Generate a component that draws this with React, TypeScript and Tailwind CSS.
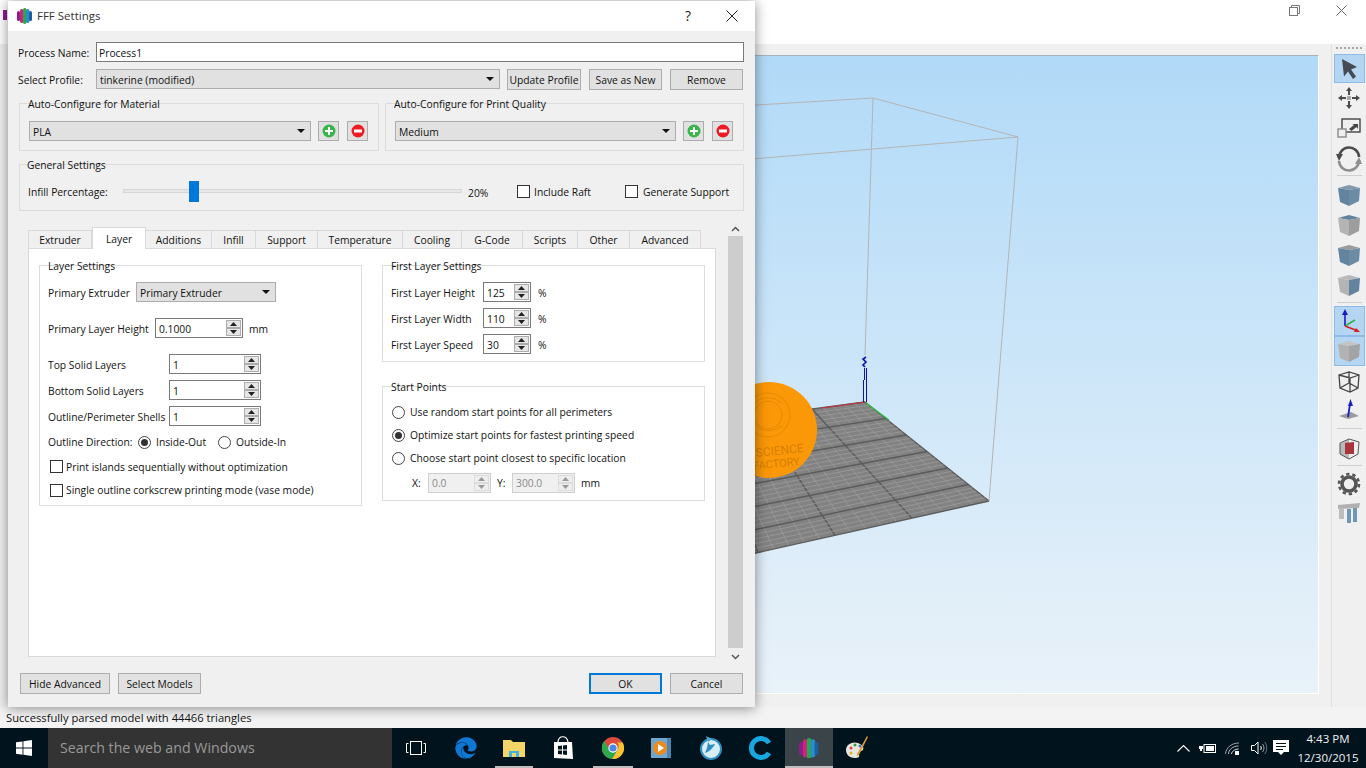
import React from "react";
import { FaEdge } from "react-icons/fa";

const B = [865, 402], R = [989, 501], F = [527, 604], L = [547, 444];
const P = (u: number, v: number) => [0, 1].map(i => B[i] + u * (R[i] - B[i]) + v * (L[i] - B[i]) + u * v * (F[i] - R[i] - L[i] + B[i]));
const line = (a: number[], b: number[], stroke: string, w: number, k: string) => (
  <line key={k} x1={a[0]} y1={a[1]} x2={b[0]} y2={b[1]} stroke={stroke} strokeWidth={w} />
);
const Grid = () => {
  const out: React.ReactNode[] = [];
  for (let i = 0; i <= 30; i++) {
    const t = i / 30;
    const major = i % 5 === 0;
    const c = major ? "#5b5b5b" : "#a2a2a2";
    const w = major ? 1.4 : 0.6;
    out.push(line(P(t, 0), P(t, 1), c, w, "a" + i));
    out.push(line(P(0, t), P(1, t), c, w, "b" + i));
  }
  return <>{out}</>;
};

const Scene = () => (
  <svg className="block w-full h-full" viewBox="8 56 1310 637">
    <polygon points={[B, R, F, L].map(p => p.join(",")).join(" ")} fill="#828282" />
    <Grid />
    <line x1="822" y1="408" x2="865" y2="402" stroke="#c8303c" strokeWidth="1.2" />
    <line x1="866" y1="403" x2="889" y2="420" stroke="#2fc04a" strokeWidth="1.3" />
    <g stroke="#b4b4b4" strokeWidth="1" fill="none">
      <line x1="873" y1="98" x2="865" y2="355" />
      <line x1="873" y1="98" x2="1018" y2="137" />
      <line x1="1018" y1="137" x2="989" y2="501" />
      <line x1="1018" y1="137" x2="740" y2="160" />
      <line x1="873" y1="98" x2="740" y2="106" />
    </g>
    <g stroke="#1010b0" strokeWidth="1" fill="none">
      <line x1="863.5" y1="402" x2="863.5" y2="380" />
      <line x1="866.5" y1="402" x2="866.5" y2="380" />
      <line x1="864.5" y1="380" x2="864.5" y2="368" />
      <line x1="866.5" y1="380" x2="866.5" y2="368" />
      <path d="M866 357l-3 2 3 3-3 3 2 2" strokeWidth="1.6" />
    </g>
    <circle cx="769" cy="430" r="48" fill="#fb9807" />
    <g fill="none" stroke="#dd8400" strokeWidth="0.7">
      <circle cx="768" cy="415" r="22" />
      <circle cx="768" cy="415" r="14" />
      <path d="M752 405q14-14 30-2M758 428q12 6 24-2" />
    </g>
    <text x="804" y="452" textAnchor="end" fontSize="12" fill="#d67f00" fontFamily="Roboto, sans-serif" transform="rotate(-6 804 452)">SCIENCE</text>
    <text x="800" y="465" textAnchor="end" fontSize="11" fill="#d67f00" fontFamily="Roboto, sans-serif" transform="rotate(-6 800 465)">FACTORY</text>
  </svg>
);

const Cube = ({ top, left, right }: { top: string; left: string; right: string }) => (
  <svg className="blur-[0.4px]" width="24" height="26" viewBox="0 0 24 26">
    <polygon points="1,6 12,3 23,6 12,8" fill={top} />
    <polygon points="1,6 12,8 12,24 3,20" fill={left} />
    <polygon points="12,8 23,6 22,19 12,24" fill={right} />
  </svg>
);

const ToolItem = ({ h, active, children }: { h: string; active?: boolean; children?: React.ReactNode }) => (
  <div className={`${h} w-[31px] flex items-center justify-center ${active ? "bg-[#b5d6f2] border border-[#8fbce6]" : ""}`}>{children}</div>
);
const ToolSep = ({ cls }: { cls: string }) => <div className={`w-[25px] h-px bg-[#cfcfcf] ${cls}`} />;

const Toolbar = () => (
  <div className="w-[35px] shrink-0 h-[663px] bg-[#f0f0f0] border-l border-[#e0e0e0] flex flex-col items-center">
    <div className="h-[3px] mt-[3px] w-[26px] border-t-2 border-dotted border-[#a8a8a8] mb-[4px]" />
    <ToolItem h="h-[29px]" active>
      <svg width="20" height="22" viewBox="0 0 20 22"><path d="M3 1l15 8-6 2.500 5 7-3 2.500-5-7.500-4 5z" fill="#454b52" /></svg>
    </ToolItem>
    <ToolItem h="h-[30px]">
      <svg width="24" height="24" viewBox="0 0 24 24" fill="#4a4a4a"><path d="M12 1l3 4h-2v4h-2V5H9zM12 23l-3-4h2v-4h2v4h2zM1 12l4-3v2h4v2H5v2zM23 12l-4 3v-2h-4v-2h4V9z" /><rect x="10" y="10" width="4" height="4" fill="#a8a8a8" /></svg>
    </ToolItem>
    <ToolItem h="h-[31px]">
      <svg width="24" height="22" viewBox="0 0 24 22" fill="none"><rect x="5" y="1" width="18" height="13" stroke="#444" strokeWidth="1.4" /><rect x="1" y="11" width="8" height="8" stroke="#8a8a8a" strokeWidth="1.4" fill="#efefef" /><path d="M12 11l5-4-2-1h6v5l-1.500-2-5 4z" fill="#444" /></svg>
    </ToolItem>
    <ToolItem h="h-[30px]">
      <svg width="26" height="26" viewBox="0 0 26 26" fill="none"><path d="M3 12A10 10 0 0 1 23 11" stroke="#4b4b4b" strokeWidth="2.6" /><path d="M0 8l7 0-4 7z" fill="#4b4b4b" /><path d="M23 14A10 10 0 0 1 3 15" stroke="#8f8f8f" strokeWidth="2.600" /><path d="M26 18l-7 0 4-7z" fill="#8f8f8f" /></svg>
    </ToolItem>
    <ToolSep cls="mt-[1px] mb-[4px]" />
    <ToolItem h="h-[30px]"><Cube top="#8299ad" left="#62849f" right="#6c8ca6" /></ToolItem>
    <ToolItem h="h-[30px]"><Cube top="#62849f" left="#b4b4b4" right="#9d9d9d" /></ToolItem>
    <ToolItem h="h-[30px]"><Cube top="#9b9b9b" left="#62849f" right="#6c8ca6" /></ToolItem>
    <ToolItem h="h-[30px]"><Cube top="#b8b8b8" left="#b4b4b4" right="#62849f" /></ToolItem>
    <ToolSep cls="mt-[2px] mb-[3px]" />
    <ToolItem h="h-[30px]" active>
      <svg width="24" height="26" viewBox="0 0 24 26" fill="none"><path d="M8 18V5" stroke="#1c1cc4" strokeWidth="1.6" /><path d="M8 1l3 6H5z" fill="#1c1cc4" /><path d="M8 18l10-6" stroke="#2fb350" strokeWidth="1.6" /><path d="M8 18l13 5" stroke="#d42020" strokeWidth="1.600" /><path d="M23 24l-6 0 2-4z" fill="#d42020" /></svg>
    </ToolItem>
    <ToolItem h="h-[30px]" active><Cube top="#c4c4c4" left="#b2b2b2" right="#a3a3a3" /></ToolItem>
    <ToolItem h="h-[30px]">
      <svg width="24" height="24" viewBox="0 0 24 24" fill="none" stroke="#444" strokeWidth="1.300"><path d="M2 6l10-3 10 3-1 13-8 4-10-4zM2 6l11 3 9-3M13 9v14M12 3v11M3 19l9-5 9 5M2 6" /></svg>
    </ToolItem>
    <ToolItem h="h-[28px]">
      <svg width="24" height="24" viewBox="0 0 24 24"><polygon points="2,18 14,14 22,18 11,21" fill="#9a9a9a" /><path d="M11 19L13 6" stroke="#1c1cc4" strokeWidth="1.800" /><path d="M13.500 1l2.500 7h-5z" fill="#1c1cc4" /></svg>
    </ToolItem>
    <ToolSep cls="mt-[4px] mb-[4px]" />
    <ToolItem h="h-[30px]">
      <svg width="24" height="24" viewBox="0 0 24 24" fill="none"><polygon points="12,3 3,8 3,18 12,23 12,3" fill="#b9b9b9" /><polygon points="8,7 17,6 17,18 8,18" fill="#a8343c" /><path d="M12 3L22 6l-1 12-9 5-9-5V7z" stroke="#555" strokeWidth="1" /></svg>
    </ToolItem>
    <ToolSep cls="mt-[2px] mb-[3px]" />
    <ToolItem h="h-[30px]">
      <svg width="24" height="24" viewBox="0 0 24 24" fill="none"><circle cx="12" cy="12" r="7" stroke="#555" strokeWidth="3.600" /><circle cx="12" cy="12" r="10" stroke="#555" strokeWidth="2.600" strokeDasharray="3.300 2.980" /></svg>
    </ToolItem>
    <ToolItem h="h-[28px]">
      <svg width="24" height="22" viewBox="0 0 24 22"><polygon points="1,3 23,1 22,6 1,7" fill="#b0b0b0" /><rect x="2" y="6" width="5" height="11" fill="#bdbdbd" /><rect x="10" y="7" width="4" height="14" fill="#6e97b8" /><rect x="16" y="6" width="4" height="14" fill="#6e97b8" /></svg>
    </ToolItem>
  </div>
);

const GroupBox = ({ title, w, h, tx = 8, children }: { title: string; w: string; h: string; tx?: number; children?: React.ReactNode }) => (
  <div className={`relative shrink-0 border border-[#dcdcdc] ${w} ${h}`}>
    <span className={`absolute -top-[7px] px-px leading-[14px] bg-inherit ${tx === 7 ? "left-[6px]" : "left-[7px]"}`}>{title}</span>
    {children}
  </div>
);

const Arrow = () => (
  <svg width="8" height="4" viewBox="0 0 8 4" className="block"><path d="M0 0h8L4 4z" fill="#111" /></svg>
);
const Select = ({ w, text }: { w: string; text: string }) => (
  <div className={`${w} h-[20px] bg-[#e1e1e1] border border-[#adadad] flex items-center justify-between pl-[3px] pr-[5px] shrink-0`}>
    <span className="pt-[2px]">{text}</span>
    <Arrow />
  </div>
);
const Btn = ({ w, text, def }: { w: string; text: string; def?: boolean }) => (
  <div className={`${w} h-[21px] shrink-0 flex items-center justify-center pt-[2px] bg-[#e1e1e1] ${def ? "border-2 border-[#0078d7]" : "border border-[#adadad]"}`}>{text}</div>
);
const IconBtn = ({ plus }: { plus?: boolean }) => (
  <div className="w-[21px] h-[20px] shrink-0 flex items-center justify-center bg-[#e1e1e1] border border-[#adadad]">
    <svg width="14" height="14" viewBox="0 0 14 14">
      <circle cx="7" cy="7" r="6.500" fill={plus ? "#39b54a" : "#ed1c24"} />
      {plus ? <path d="M6 3h2v3h3v2H8v3H6V8H3V6h3z" fill="#fff" /> : <rect x="3" y="5.500" width="8" height="3" fill="#fff" />}
    </svg>
  </div>
);
const Spin = ({ w, value, disabled }: { w: string; value: string; disabled?: boolean }) => (
  <div className={`${w} h-[20px] shrink-0 flex items-center justify-between border ${disabled ? "border-[#cfcfcf] bg-[#f0f0f0] text-[#8a8a8a]" : "border-[#7a7a7a] bg-white"} pl-[3px] pr-px`}>
    <span className={disabled ? "" : "pt-[2px]"}>{value}</span>
    <div className="w-[15px] h-[16px] flex flex-col">
      {[0, 1].map(i => (
        <div key={i} className={`h-[8px] flex items-center justify-center border ${disabled ? "border-[#dcdcdc] bg-[#eeeeee]" : "border-[#adadad] bg-[#e6e6e6]"}`}>
          <svg width="7" height="4" viewBox="0 0 7 4"><path d={i === 0 ? "M0 4h7L3.500 0z" : "M0 0h7L3.500 4z"} fill={disabled ? "#999" : "#222"} /></svg>
        </div>
      ))}
    </div>
  </div>
);
const Check = () => <div className="w-[13px] h-[13px] shrink-0 border border-[#333] bg-white" />;
const Radio = ({ on }: { on?: boolean }) => (
  <div className="w-[13px] h-[13px] shrink-0 rounded-full border border-[#444] bg-white flex items-center justify-center">
    {on && <div className="w-[7px] h-[7px] rounded-full bg-[#333]" />}
  </div>
);
const Row = ({ cls = "", children }: { cls?: string; children?: React.ReactNode }) => (
  <div className={`flex items-center h-[20px] ${cls}`}>{children}</div>
);
const Low = "[&>span]:pt-[2px]";

const tabs: [string, string][] = [
  ["Extruder", "w-[64px]"], ["Layer", "w-[54px]"], ["Additions", "w-[66px]"], ["Infill", "w-[44px]"], ["Support", "w-[62px]"],
  ["Temperature", "w-[85px]"], ["Cooling", "w-[59px]"], ["G-Code", "w-[61px]"], ["Scripts", "w-[55px]"], ["Other", "w-[52px]"], ["Advanced", "w-[71px]"],
];

const Logo = ({ s = 1 }: { s?: number }) => (
  <svg width={15 * s} height={16 * s} viewBox="0 0 15 16">
    <rect x="0" y="3" width="3" height="10" rx="1.500" fill="#8c1d8f" />
    <rect x="3" y="1" width="3.500" height="14" rx="1.700" fill="#d3207f" />
    <rect x="6" y="0" width="3.500" height="16" rx="1.700" fill="#2aa84a" />
    <rect x="9" y="1" width="3.500" height="14" rx="1.700" fill="#2a8cc8" />
    <rect x="12" y="3" width="3" height="10" rx="1.500" fill="#1d5f9a" />
  </svg>
);

const Dialog = () => (
  <div className="absolute left-[8px] top-[1px] w-[747px] h-[706px] bg-[#f0f0f0] shadow-[0_1px_12px_rgba(0,0,0,0.45)] flex flex-col text-[10.300px]">
    <div className="h-[30px] bg-white flex items-center pl-[9px] shrink-0">
      <Logo />
      <span className="ml-[5px] text-[11.500px] text-[#333]">FFF Settings</span>
      <span className="ml-auto text-[14px] text-[#222] w-[20px] text-center">?</span>
      <svg className="ml-[28px] mr-[17px]" width="12" height="12" viewBox="0 0 12 12"><path d="M.5.500l11 11M11.500.500l-11 11" stroke="#222" strokeWidth="1" /></svg>
    </div>
    <div className="pl-[10px] pr-[11px] flex flex-col flex-1 bg-[#f0f0f0]">
      <div className={`mt-[11px] flex items-center h-[20px] ${Low}`}>
        <span className="w-[78px]">Process Name:</span>
        <div className={`flex-1 h-[20px] border border-[#7a7a7a] bg-white pl-[2px] flex items-center ${Low}`}><span>Process1</span></div>
      </div>
      <div className="mt-[7px] flex items-start h-[21px]">
        <span className="w-[78px] h-[20px] flex items-center pt-[2px]">Select Profile:</span>
        <Select w="w-[404px]" text="tinkerine (modified)" />
        <div className="ml-[7px]"><Btn w="w-[74px]" text="Update Profile" /></div>
        <div className="ml-[8px]"><Btn w="w-[73px]" text="Save as New" /></div>
        <div className="ml-[8px]"><Btn w="w-[73px]" text="Remove" /></div>
      </div>
      <div className="mt-[13px] ml-px flex gap-[6px] bg-[#f0f0f0]">
        <GroupBox title="Auto-Configure for Material" w="w-[360px]" h="h-[48px]">
          <div className="flex pt-[17px] pl-[9px] gap-[7px]">
            <Select w="w-[282px]" text="PLA" />
            <IconBtn plus />
            <div className="ml-px"><IconBtn /></div>
          </div>
        </GroupBox>
        <GroupBox title="Auto-Configure for Print Quality" w="w-[359px]" h="h-[48px]">
          <div className="flex pt-[17px] pl-[9px] gap-[7px]">
            <Select w="w-[281px]" text="Medium" />
            <IconBtn plus />
            <div className="ml-px"><IconBtn /></div>
          </div>
        </GroupBox>
      </div>
      <div className="mt-[13px] ml-px bg-[#f0f0f0]">
        <GroupBox title="General Settings" w="w-[725px]" h="h-[47px]" tx={7}>
          <div className="flex items-center h-full pt-[7px] pl-[8px]">
            <span className="w-[95px] pt-[3px]">Infill Percentage:</span>
            <div className="relative w-[339px] h-[21px] flex items-center">
              <div className="w-full h-[4px] bg-[#e7e7e7] border border-[#d6d6d6]" />
              <div className="absolute left-[66px] top-0 w-[10px] h-[21px] bg-[#0078d7]" />
            </div>
            <span className="ml-[6px] w-[49px] pt-[4px]">20%</span>
            <div className="w-[108px] flex items-center"><Check /><span className="ml-[4px] pt-[2px]">Include Raft</span></div>
            <div className="flex items-center"><Check /><span className="ml-[5px] pt-[2px]">Generate Support</span></div>
          </div>
        </GroupBox>
      </div>
      <div className="mt-[11px] h-[444px] flex pl-[10px]">
        <div className="w-[688px] pt-[6px] flex flex-col">
          <div className="flex h-[21px] items-end relative z-10 -mb-px">
            {tabs.map(([t, w]) =>
              t === "Layer" ? (
                <div key={t} className={`${w} h-[22px] pt-[1px] bg-white border border-b-0 border-[#d9d9d9] flex items-center justify-center`}>{t}</div>
              ) : (
                <div key={t} className={`${w} h-[19px] pt-[2px] bg-[#f0f0f0] border border-l-0 first:border-l border-[#d9d9d9] flex items-center justify-center`}>{t}</div>
              )
            )}
          </div>
          <div className="h-[409px] bg-white border border-[#d9d9d9] flex pl-[10px] pt-[16px]">
            <div className="bg-white">
              <GroupBox title="Layer Settings" w="w-[323px]" h="h-[241px]">
                <div className="pl-[8px] pt-[16px]">
                  <Row cls={Low}><span className="w-[88px]">Primary Extruder</span><Select w="w-[140px]" text="Primary Extruder" /></Row>
                  <Row cls={`mt-[16px] ${Low}`}><span className="w-[107px]">Primary Layer Height</span><Spin w="w-[88px]" value="0.1000" /><span className="ml-[6px]">mm</span></Row>
                  <Row cls={`mt-[16px] ${Low}`}><span className="w-[121px]">Top Solid Layers</span><Spin w="w-[92px]" value="1" /></Row>
                  <Row cls={`mt-[6px] ${Low}`}><span className="w-[121px]">Bottom Solid Layers</span><Spin w="w-[92px]" value="1" /></Row>
                  <Row cls={`mt-[6px] ${Low}`}><span className="w-[121px]">Outline/Perimeter Shells</span><Spin w="w-[92px]" value="1" /></Row>
                  <Row cls="mt-[6px]"><span className="w-[90px]">Outline Direction:</span><Radio on /><span className="ml-[5px] w-[57px]">Inside-Out</span><div className="ml-[5px]"><Radio /></div><span className="ml-[5px]">Outside-In</span></Row>
                  <div className="mt-[8px] h-[13px] flex items-center pl-[2px]"><Check /><span className="ml-[3px] pt-[2px]">Print islands sequentially without optimization</span></div>
                  <div className="mt-[11px] h-[13px] flex items-center pl-[2px]"><Check /><span className="ml-[3px]">Single outline corkscrew printing mode (vase mode)</span></div>
                </div>
              </GroupBox>
            </div>
            <div className="ml-[20px] flex flex-col bg-white">
              <GroupBox title="First Layer Settings" w="w-[323px]" h="h-[97px]">
                <div className="pl-[8px] pt-[16px]">
                  <Row cls={Low}><span className="w-[92px]">First Layer Height</span><Spin w="w-[48px]" value="125" /><span className="ml-[7px]">%</span></Row>
                  <Row cls={`mt-[6px] ${Low}`}><span className="w-[92px]">First Layer Width</span><Spin w="w-[48px]" value="110" /><span className="ml-[7px]">%</span></Row>
                  <Row cls={`mt-[6px] ${Low}`}><span className="w-[92px]">First Layer Speed</span><Spin w="w-[48px]" value="30" /><span className="ml-[7px]">%</span></Row>
                </div>
              </GroupBox>
              <div className="mt-[24px]">
                <GroupBox title="Start Points" w="w-[323px]" h="h-[115px]">
                  <div className="pl-[9px] pt-[15px]">
                    <Row><Radio /><span className="ml-[5px]">Use random start points for all perimeters</span></Row>
                    <Row cls="mt-[3px]"><Radio on /><span className="ml-[5px]">Optimize start points for fastest printing speed</span></Row>
                    <Row cls="mt-[3px]"><Radio /><span className="ml-[5px]">Choose start point closest to specific location</span></Row>
                    <Row cls="mt-[5px] pl-[20px]"><span className="w-[16px]">X:</span><Spin w="w-[63px]" value="0.0" disabled /><span className="ml-[6px] w-[15px]">Y:</span><Spin w="w-[63px]" value="300.0" disabled /><span className="ml-[6px]">mm</span></Row>
                  </div>
                </GroupBox>
              </div>
            </div>
          </div>
        </div>
        <div className="ml-[12px] w-[15px] flex flex-col">
          <div className="h-[14px] flex items-center justify-center"><svg width="9" height="6" viewBox="0 0 9 6" fill="none"><path d="M1 5l3.500-3.500L8 5" stroke="#555" strokeWidth="1.500" /></svg></div>
          <div className="h-[412px] bg-[#cdcdcd]" />
          <div className="h-[18px] flex items-center justify-center"><svg width="9" height="6" viewBox="0 0 9 6" fill="none"><path d="M1 1l3.500 3.500L8 1" stroke="#555" strokeWidth="1.500" /></svg></div>
        </div>
      </div>
      <div className="mt-[7px] flex ml-[2px] mr-px">
        <Btn w="w-[90px]" text="Hide Advanced" />
        <div className="ml-[8px]"><Btn w="w-[83px]" text="Select Models" /></div>
        <div className="ml-auto"><Btn w="w-[73px]" text="OK" def /></div>
        <div className="ml-[8px]"><Btn w="w-[73px]" text="Cancel" /></div>
      </div>
    </div>
  </div>
);

const TaskSlot = ({ w, active, under, children }: { w: string; active?: boolean; under?: boolean; children?: React.ReactNode }) => (
  <div className={`${w} h-[40px] shrink-0 relative flex items-center justify-center ${active ? "bg-[#3b4448]" : ""}`}>
    {children}
    {under && <div className={`absolute bottom-0 h-[2px] bg-[#bdbdbd] ${active ? "inset-x-0" : "inset-x-[5px]"}`} />}
  </div>
);

const Taskbar = () => (
  <div className="h-[40px] bg-[#01131d] flex items-center shrink-0 text-white">
    <div className="w-[48px] h-[40px] flex items-center justify-center shrink-0">
      <svg width="16" height="16" viewBox="0 0 16 16" fill="#fff"><path d="M0 2.300l6.500-.9v6.200H0zM7.400 1.300L16 0v7.600H7.400zM0 8.500h6.500v6.200L0 13.700zM7.400 8.500H16V16l-8.600-1.200z" /></svg>
    </div>
    <div className="w-[344px] h-[40px] bg-[#333333] flex items-center pl-[12px] text-[14.200px] text-[#999999] shrink-0">Search the web and Windows</div>
    <TaskSlot w="w-[48px]">
      <svg width="20" height="14" viewBox="0 0 20 14" fill="none" stroke="#fff"><rect x="4.500" y=".5" width="11" height="13" /><path d="M2.500 2.500H.5v9h2M17.500 2.500h2v9h-2" /></svg>
    </TaskSlot>
    <div className="w-[2px]" />
    <TaskSlot w="w-[48px]"><FaEdge size={22} color="#0f78d4" /></TaskSlot>
    <TaskSlot w="w-[48px]" under>
      <svg width="22" height="18" viewBox="0 0 22 18"><path d="M0 1h8l2 2h12v15H0z" fill="#f6d568" /><rect x="6" y="12" width="10" height="6" fill="#3fb3e0" /><rect x="9" y="14" width="4" height="4" fill="#f6d568" /></svg>
    </TaskSlot>
    <TaskSlot w="w-[50px]">
      <svg width="22" height="24" viewBox="0 0 22 24"><path d="M2 6h18l1 17-19 -1z" fill="#fff" /><path d="M6 6c0-7 9-7 10 0" stroke="#fff" fill="none" strokeWidth="1.200" /><path d="M6 10l4-.5v4H6zM11 9.500l4-.5v4.500h-4zM6 14.500h4v4l-4-.5zM11 14.500h4V19l-4-.5z" fill="#01131d" /></svg>
    </TaskSlot>
    <TaskSlot w="w-[50px]" under>
      <svg width="22" height="22" viewBox="0 0 22 22"><circle cx="11" cy="11" r="11" fill="#dd4b3e" /><path d="M20.500 5.500A11 11 0 0 1 10 22l5-8.500a5.500 5.500 0 0 0 0-8z" fill="#f7c52f" /><path d="M2.300 4L7 12a5.500 5.500 0 0 0 8 1.500L10 22A11 11 0 0 1 2.300 4z" fill="#2da94f" /><circle cx="11" cy="11" r="4.700" fill="#fff" /><circle cx="11" cy="11" r="3.600" fill="#4a89e0" /></svg>
    </TaskSlot>
    <TaskSlot w="w-[45px]">
      <svg width="20" height="20" viewBox="0 0 20 20"><rect width="20" height="20" fill="#6fa8cf" /><rect x="16" width="4" height="20" fill="#4f86ad" /><circle cx="9" cy="10" r="7" fill="#ee8a1e" /><path d="M7 6l6 4-6 4z" fill="#fff" /></svg>
    </TaskSlot>
    <TaskSlot w="w-[56px]">
      <svg width="22" height="24" viewBox="0 0 22 24"><circle cx="11" cy="13" r="10" fill="#d7eef7" /><circle cx="11" cy="13" r="10" fill="none" stroke="#2e8fc0" strokeWidth="2" /><path d="M5 17c4-1 8-5 10-9l-5 1-2-3-1 6z" fill="#2e8fc0" /><path d="M6 0l6 3-4 3z" fill="#4aa8d8" /></svg>
    </TaskSlot>
    <TaskSlot w="w-[44px]">
      <svg width="24" height="24" viewBox="0 0 24 24" fill="none"><path d="M20 7A9.500 9.500 0 1 0 20 17" stroke="#15a7e0" strokeWidth="5" /></svg>
    </TaskSlot>
    <div className="w-[2px]" />
    <TaskSlot w="w-[48px]" active under><Logo s={1.300} /></TaskSlot>
    <TaskSlot w="w-[48px]">
      <svg width="24" height="24" viewBox="0 0 24 24"><path d="M1 14c0-6 7-9 12-7 6 2 7 7 3 8-3 1-3 3-2 4 1 2-1 3-4 3-5 0-9-3-9-8z" fill="#e8e6df" /><circle cx="6" cy="12" r="1.500" fill="#e04040" /><circle cx="10" cy="9" r="1.500" fill="#3a9a4a" /><circle cx="15" cy="10" r="1.500" fill="#3a78c8" /><circle cx="6" cy="17" r="1.500" fill="#e0b030" /><path d="M22 0l1 1-9 18-2 1 0-2z" fill="#d99a3a" /></svg>
    </TaskSlot>
    <div className="flex-1 flex items-center justify-end h-[40px]">
      <svg className="mr-[9px]" width="13" height="8" viewBox="0 0 13 8" fill="none"><path d="M.5 7.500L6.500 1.500l6 6" stroke="#fff" strokeWidth="1.100" /></svg>
      <svg className="mr-[9px]" width="17" height="10" viewBox="0 0 17 10"><rect x="5" y="1.500" width="11.500" height="8" fill="none" stroke="#fff" /><rect x="7" y="3" width="8" height="5" fill="#fff" /><path d="M0 3h4v3H3v2H1V6H0z" fill="#fff" /></svg>
      <svg className="mr-[11px]" width="15" height="13" viewBox="0 0 15 13" fill="none" stroke="#fff"><path d="M.5 12C1 6 6 1 14 1" strokeOpacity=".6" /><path d="M3.500 12c0-4 4-8 10-8" strokeOpacity=".7" /><path d="M6.500 12c0-2 3-5 7-5" strokeOpacity=".9" /><rect x="10" y="9" width="4" height="4" fill="#fff" stroke="none" /></svg>
      <svg className="mr-[5px]" width="17" height="14" viewBox="0 0 17 14" fill="none" stroke="#fff"><path d="M.5 4.500h3l3.500-3.500v12l-3.500-3.500h-3z" /><path d="M9.500 5c1 1 1 3 0 4" /><path d="M11.500 3c2 2 2 6 0 8" strokeOpacity=".6" /><path d="M13.500 1c3 3 3 9 0 12" strokeOpacity=".4" /></svg>
      <svg className="mr-[6px]" width="16" height="16" viewBox="0 0 16 16"><path fillRule="evenodd" d="M0 0h16v12h-5l-3 3-3-3H0zM3 3v1h10V3zM3 6v1h10V6zM3 9v1h7V9z" fill="#fff" /></svg>
      <div className="w-[66px] flex flex-col items-center text-[11.500px] leading-[19px] mr-[5px] text-[#f2f2f2]">
        <span>4:43 PM</span>
        <span>12/30/2015</span>
      </div>
    </div>
  </div>
);

export default function App() {
  return (
    <div className="relative w-[1366px] h-[768px] overflow-hidden flex flex-col bg-white text-[11.200px] leading-none whitespace-nowrap text-[#111] [font-family:'Open_Sans','Liberation_Sans',sans-serif]">
      <div className="h-[44px] bg-white shrink-0 flex items-center justify-between">
        <div className="w-[4px] h-[10px] ml-[3px] mb-[14px] bg-[#8c1d8f]" />
        <div className="flex">
          <svg className="mb-[24px] mr-[36px]" width="11" height="11" viewBox="0 0 11 11" fill="none" stroke="#777"><rect x=".5" y="2.500" width="8" height="8" /><path d="M2.500 2.500v-2h8v8h-2" /></svg>
          <svg className="mb-[24px] mr-[19px]" width="11" height="11" viewBox="0 0 11 11" fill="none" stroke="#666"><path d="M.5.500l10 10M10.500.500l-10 10" /></svg>
        </div>
      </div>
      <div className="flex h-[663px] shrink-0 bg-[#f0f0f0]">
        <div className="flex-1 flex flex-col pl-[8px] pr-[12px] pt-[11px]">
          <div className="h-[639px] border-t border-[#a8b4bc] border-r border-r-white border-b border-b-white bg-linear-to-b from-[#b1daf8] to-[#e9f2f9] overflow-hidden">
            <Scene />
          </div>
        </div>
        <Toolbar />
      </div>
      <div className="h-[21px] shrink-0 bg-[#f3f3f3] pl-[6px] flex items-center text-[#111]">Successfully parsed model with 44466 triangles</div>
      <Taskbar />
      <Dialog />
    </div>
  );
}
